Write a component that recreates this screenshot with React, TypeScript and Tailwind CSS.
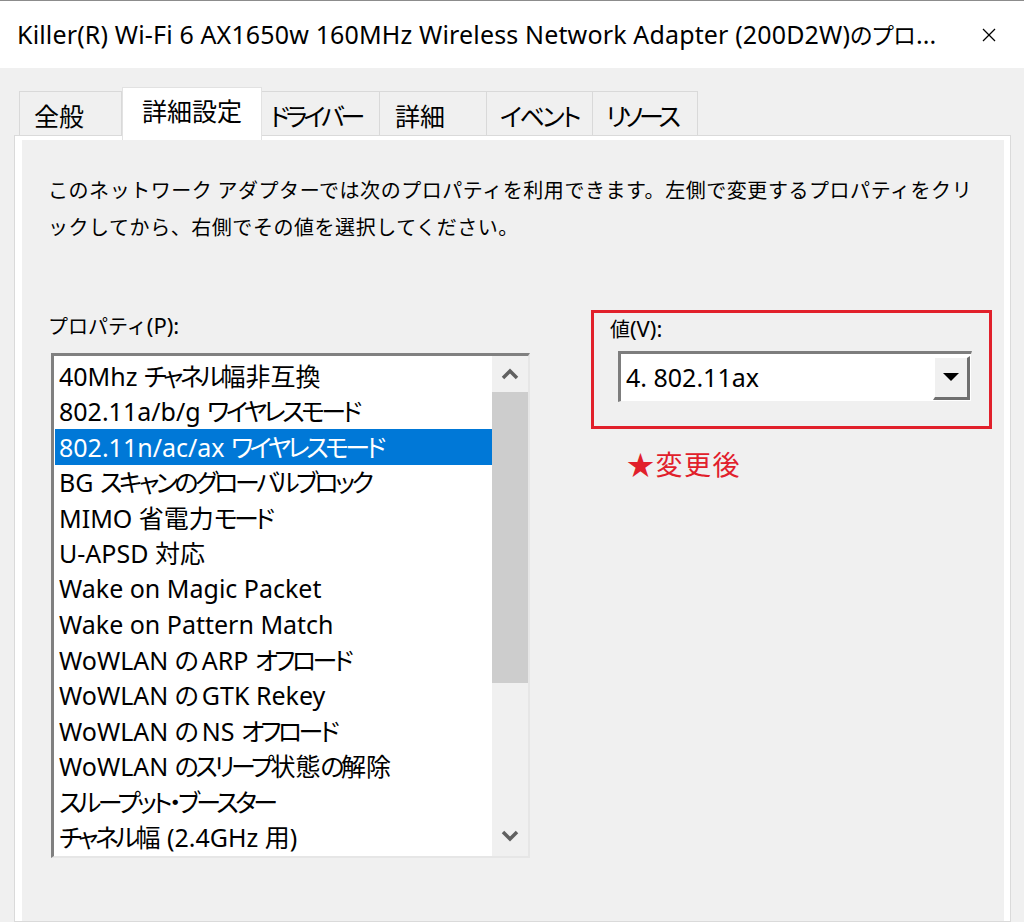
import React from "react";

const items = [
  "40Mhz チャネル幅非互換",
  "802.11a/b/g ワイヤレスモード",
  "802.11n/ac/ax ワイヤレスモード",
  "BG スキャンのグローバルブロック",
  "MIMO 省電力モード",
  "U-APSD 対応",
  "Wake on Magic Packet",
  "Wake on Pattern Match",
  "WoWLAN の ARP オフロード",
  "WoWLAN の GTK Rekey",
  "WoWLAN の NS オフロード",
  "WoWLAN のスリープ状態の解除",
  "スループット・ブースター",
  "チャネル幅 (2.4GHz 用)",
];

const tabs = [
  { label: "全般", w: "w-[103px]", pl: "pl-[14px]", tr: "" },
  { label: "詳細設定", w: "w-[140px]", active: true },
  { label: "ドライバー", w: "w-[118px]", pl: "pl-[8px]", tr: "tracking-[-4px]" },
  { label: "詳細", w: "w-[107px]", pl: "pl-[15px]", tr: "" },
  { label: "イベント", w: "w-[106px]", pl: "pl-[13px]", tr: "tracking-[-2.5px]" },
  { label: "リソース", w: "w-[105px]", pl: "pl-[13px]", tr: "tracking-[-4px]" },
];

const SPLIT = /([\u3040-\u30ff]+|[\u3000-\u303f\u4e00-\u9fff\uff00-\uffef]+)/;
const KANA = /^[\u3040-\u30ff]+$/;
const KANJI = /^[\u3000-\u303f\u4e00-\u9fff\uff00-\uffef]+$/;

function Mixed({ text, latin, kana, kanji }: { text: string; latin: string; kana: string; kanji: string }) {
  const parts = text.split(SPLIT).filter((p) => p && p.length > 0);
  return (
    <>
      {parts.map((p, i) => (
        <span key={i} className={KANA.test(p) ? kana : KANJI.test(p) ? kanji : latin}>
          {p}
        </span>
      ))}
    </>
  );
}

export default function App() {
  return (
    <div className="w-[1024px] h-[922px] overflow-hidden bg-[#f0f0f0] text-black font-['Noto_Sans_CJK_JP','Noto_Sans',sans-serif]">
      {/* title bar */}
      <div className="h-[68px] bg-white border-t border-[#8c8c8c] flex items-center justify-between pl-[17px] pr-[28px]">
        <div className="leading-none whitespace-nowrap">
          <Mixed
            text="Killer(R) Wi-Fi 6 AX1650w 160MHz Wireless Network Adapter (200D2W)のプロ..."
            latin="text-[25px] tracking-[0.15px] font-['Noto_Sans',sans-serif]"
            kana="text-[23px] [font-feature-settings:'palt'] font-['Noto_Sans_CJK_JP',sans-serif]"
            kanji="text-[23px] font-['Noto_Sans_CJK_JP',sans-serif]"
          />
        </div>
        <svg width="14" height="14" viewBox="0 0 14 14">
          <line x1="1" y1="1" x2="13" y2="13" stroke="#000" strokeWidth="1.3" />
          <line x1="13" y1="1" x2="1" y2="13" stroke="#000" strokeWidth="1.3" />
        </svg>
      </div>

      {/* tabs */}
      <div className="flex items-end pl-[19px] h-[67px] relative z-10">
        {tabs.map((t) =>
          t.active ? (
            <div
              key={t.label}
              className={`${t.w} h-[53px] -mb-[5px] bg-white flex items-start justify-center pt-[4px] text-[25px] whitespace-nowrap border-x border-t border-[#e2e2e2]`}
            >
              {t.label}
            </div>
          ) : (
            <div
              key={t.label}
              className={`${t.w} ${t.pl} h-[44px] border-t border-r border-[#d9d9d9] first:border-l flex items-center justify-start text-[25px] whitespace-nowrap pt-[5px] [font-feature-settings:'palt']`}
            >
              <span className={t.tr}>{t.label}</span>
            </div>
          )
        )}
      </div>

      {/* panel */}
      <div className="ml-[14px] w-[997px] h-[787px] bg-white border border-[#dadada] pl-[7px] pr-[6px] pt-[4px]">
        <div className="bg-[#f0f0f0] h-full pl-[26px] pt-[31px]">
          <div className="text-[20px] leading-[37px] tracking-[0.55px]">
            <div>このネットワーク アダプターでは次のプロパティを利用できます。左側で変更するプロパティをクリ</div>
            <div>ックしてから、右側でその値を選択してください。</div>
          </div>

          <div className="flex mt-[65px]">
            {/* left column */}
            <div className="w-[543px]">
              <div className="text-[20px] leading-[30px]">
                <Mixed
                  text="プロパティ(P):"
                  latin="text-[22px] font-['Noto_Sans',sans-serif]"
                  kana="text-[20px]"
                  kanji="text-[20px]"
                />
              </div>
              <div className="mt-[12px] ml-[3px] w-[479px] h-[505px] border-t-[3px] border-l-[3px] border-t-[#808080] border-l-[#808080] border-r-[2px] border-b-[2px] border-r-[#e6e6e6] border-b-[#e6e6e6] bg-white flex">
                <div className="flex-1 pt-[2px] pl-[1px]">
                  {items.map((it, i) => (
                    <div
                      key={it}
                      className={`h-[35.5px] flex items-center pl-[4px] whitespace-nowrap ${
                        i === 2 ? "bg-[#0078d7] text-white" : ""
                      }`}
                    >
                      <span className="leading-none">
                        <Mixed
                          text={it}
                          latin="text-[25px] font-['Noto_Sans',sans-serif]"
                          kana="text-[25px] tracking-[-3.5px] [font-feature-settings:'palt'] font-['Noto_Sans_CJK_JP',sans-serif]"
                          kanji="text-[25px] font-['Noto_Sans_CJK_JP',sans-serif]"
                        />
                      </span>
                    </div>
                  ))}
                </div>
                <div className="w-[36px] bg-[#f0f0f0] flex flex-col">
                  <div className="h-[36px] flex items-center justify-center">
                    <svg width="20" height="14" viewBox="0 0 20 14">
                      <polyline points="3,11 10,4 17,11" fill="none" stroke="#606060" strokeWidth="3.5" />
                    </svg>
                  </div>
                  <div className="h-[291px] bg-[#cdcdcd]" />
                  <div className="flex-1" />
                  <div className="h-[40px] flex items-center justify-center">
                    <svg width="20" height="14" viewBox="0 0 20 14">
                      <polyline points="3,3 10,10 17,3" fill="none" stroke="#606060" strokeWidth="3.5" />
                    </svg>
                  </div>
                </div>
              </div>
            </div>

            {/* right column */}
            <div>
              <div className="w-[401px] h-[119px] border-[3px] border-[#e1202b] pl-[16px] pt-[1px]">
                <div className="text-[20px] leading-[28px]">
                  <Mixed
                    text="値(V):"
                    latin="text-[22px] font-['Noto_Sans',sans-serif]"
                    kana="text-[20px]"
                    kanji="text-[20px]"
                  />
                </div>
                <div className="mt-[8px] ml-[8px] w-[354px] h-[51px] border-t-[3px] border-l-[3px] border-t-[#7d7d7d] border-l-[#7d7d7d] border-r border-b border-r-[#f0f0f0] border-b-[#f0f0f0] bg-white flex items-center">
                  <div className="flex-1 pl-[5px] text-[25px] leading-none font-['Noto_Sans',sans-serif]">4. 802.11ax</div>
                  <div className="w-[37px] h-[44px] mr-[1px] bg-[#f0f0f0] border-t-2 border-l-2 border-t-white border-l-white border-r-[3px] border-b-[3px] border-r-[#6f6f6f] border-b-[#6f6f6f] flex items-center justify-center">
                    <svg width="18" height="10" viewBox="0 0 18 10">
                      <polygon points="1,1 17,1 9,9" fill="#000" />
                    </svg>
                  </div>
                </div>
              </div>
              <div className="mt-[18px] ml-[36px] text-[27px] leading-[34px] tracking-[1.5px] text-[#e1202b]">
                ★変更後
              </div>
            </div>
          </div>
        </div>
      </div>
    </div>
  );
}
